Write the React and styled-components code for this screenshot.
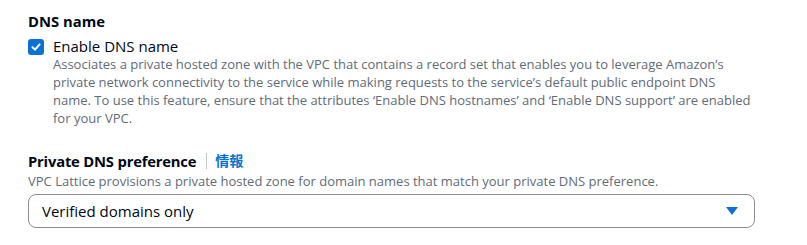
import styled, { createGlobalStyle } from 'styled-components'

const Global = createGlobalStyle`
  body {
    margin: 0;
    background: #ffffff;
    font-family: "Open Sans", "Noto Sans CJK JP", sans-serif;
    color: #000716;
  }
`

const Page = styled.div`
  padding: 10px 52px 0 28px;
  display: flex;
  flex-direction: column;
`

const Section = styled.div`
  display: flex;
  flex-direction: column;
  margin-bottom: ${props => props.gap || 0}px;
`

const Heading = styled.div`
  font-size: 14.8px;
  line-height: 22px;
  font-weight: 700;
  letter-spacing: ${props => props.tight ? '-0.2px' : '0'};
  display: flex;
  align-items: center;
`

const Divider = styled.span`
  width: 1px;
  height: 16px;
  background: #c6c6cd;
  margin: 0 8px 0 10px;
`

const InfoLink = styled.a`
  color: #0972d3;
  font-weight: 700;
  font-size: 14px;
  letter-spacing: 0;
  text-decoration: none;
`

const CheckRow = styled.label`
  display: flex;
  gap: 9px;
  margin-top: 5px;
`

const Box = styled.span`
  flex: none;
  width: 16px;
  height: 16px;
  margin-top: 2px;
  border-radius: 3px;
  background: #0972d3;
  display: flex;
  align-items: center;
  justify-content: center;
`

const CheckText = styled.div`
  display: flex;
  flex-direction: column;
`

const Label = styled.div`
  font-size: 15px;
  line-height: 18px;
`

const Description = styled.div`
  font-size: 13px;
  line-height: 18px;
  color: #5f6b7a;
`

const Select = styled.div`
  margin-top: 4px;
  height: 34px;
  box-sizing: border-box;
  border: 1px solid #8c8c94;
  border-radius: 8px;
  padding: 0 16px 0 13px;
  display: flex;
  align-items: center;
  justify-content: space-between;
  font-size: 15px;
`

const Caret = styled.svg`
  width: 12px;
  height: 8px;
`

const App = () => (
  <>
    <Global />
    <Page>
      <Section gap={23}>
        <Heading>DNS name</Heading>
        <CheckRow>
          <Box>
            <svg width="12" height="12" viewBox="0 0 12 12">
              <path d="M2.5 6.2 L5 8.6 L9.6 3.4" fill="none" stroke="#fff" strokeWidth="2" strokeLinecap="round" strokeLinejoin="round" />
            </svg>
          </Box>
          <CheckText>
            <Label>Enable DNS name</Label>
            <Description>
              Associates a private hosted zone with the VPC that contains a record set that enables you to leverage Amazon’s private network connectivity to the service while making requests to the service’s default public endpoint DNS name. To use this feature, ensure that the attributes ‘Enable DNS hostnames’ and ‘Enable DNS support’ are enabled for your VPC.
            </Description>
          </CheckText>
        </CheckRow>
      </Section>
      <Section>
        <Heading tight>
          Private DNS preference
          <Divider />
          <InfoLink href="#">情報</InfoLink>
        </Heading>
        <Description>
          VPC Lattice provisions a private hosted zone for domain names that match your private DNS preference.
        </Description>
        <Select>
          <span>Verified domains only</span>
          <Caret viewBox="0 0 12 8">
            <path d="M0 0 H12 L6 8 Z" fill="#0972d3" />
          </Caret>
        </Select>
      </Section>
    </Page>
  </>
)

export default App
